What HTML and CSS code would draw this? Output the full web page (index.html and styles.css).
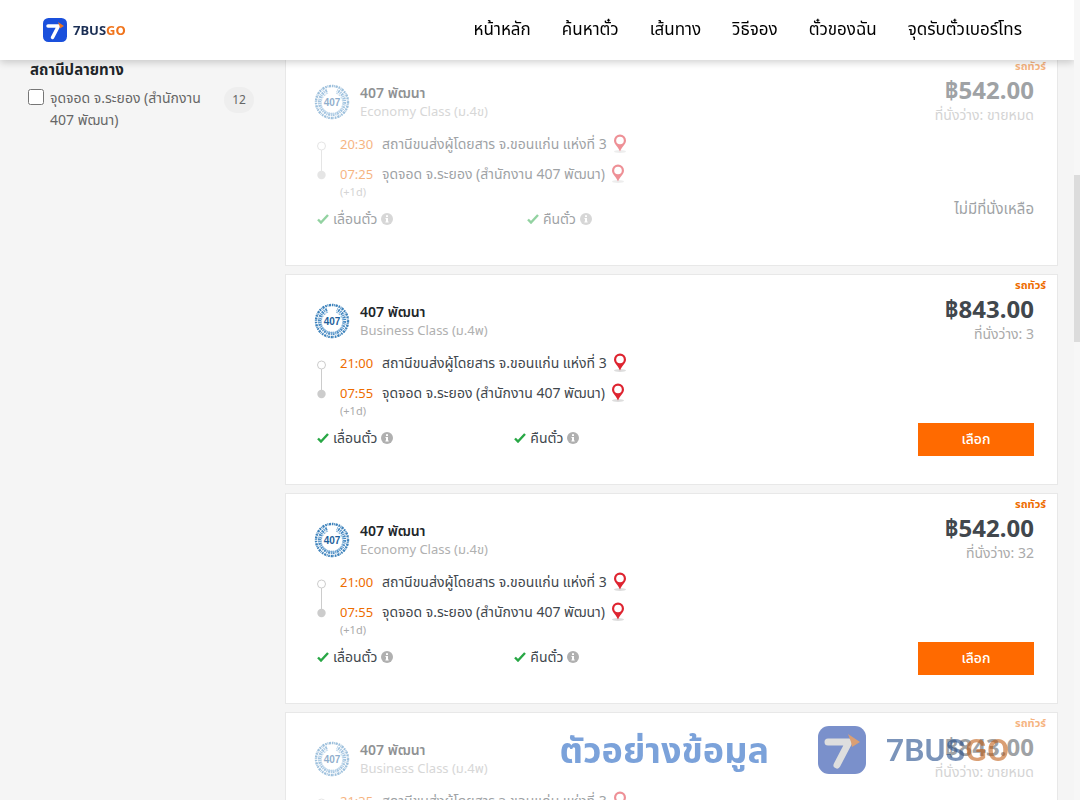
FILE: index.html
```html
<!DOCTYPE html>
<html lang="th">

<head>
    <meta charset="UTF-8">
    <meta name="viewport" content="width=device-width, initial-scale=1.0">
    <title>7BUSGO - ค้นหาตั๋ว</title>
    <link rel="stylesheet" href="styles.css">
</head>

<body>
    <!-- Shared icons -->
    <svg class="sprite" aria-hidden="true">
        <symbol id="brand" viewBox="0 0 48 48">
            <rect class="brand-bg" width="48" height="48" rx="11" />
            <path class="brand-seven" d="M10 16h21L19 39" />
            <path class="brand-arrow" d="M30 8l12 8-8 5-1-5z" />
        </symbol>
        <symbol id="operator" viewBox="0 0 36 36">
            <!-- lettering around the edge -->
            <circle cx="18" cy="18" r="16" fill="none" stroke="#3d82bb" stroke-width="2.4" stroke-dasharray="1.6 .7 .8 .6 2.2 .9" />
            <!-- laurel wreath, open at the top -->
            <path d="M13 6.500A12.500 12.500 0 1 0 23 6.500" fill="none" stroke="#4a8cc4" stroke-width="3.200" stroke-dasharray="1.800 .8 1 .7" />
            <path d="M14 9A10.800 10.800 0 1 0 22 9" fill="none" stroke="#8db8dc" stroke-width="1.200" stroke-dasharray="2 1" />
            <text x="18" y="21.500" text-anchor="middle" class="operator-text">407</text>
        </symbol>
        <symbol id="pin" viewBox="0 0 14 20">
            <ellipse cx="7" cy="17.500" rx="6" ry="1.500" fill="#ddd" />
            <path d="M7 17.500C5.500 13 1 10.500 1 6.500a6 6 0 0 1 12 0C13 10.500 8.500 13 7 17.500z" fill="#de2430" />
            <circle cx="7" cy="6.500" r="3.800" fill="#fff" />
        </symbol>
        <symbol id="rail" viewBox="0 0 9 40">
            <path d="M4.500 9v22" stroke="#ccc" stroke-width="1" />
            <circle cx="4.500" cy="5" r="4" fill="#fff" stroke="#ccc" />
            <circle cx="4.500" cy="34" r="4.200" fill="#ccc" />
        </symbol>
        <symbol id="check" viewBox="0 0 12 10">
            <path d="M1 5.500l3 3L11 1" fill="none" stroke="#28a745" stroke-width="2.400" />
        </symbol>
        <symbol id="info" viewBox="0 0 12 12">
            <circle cx="6" cy="6" r="6" fill="#b0b0b0" />
            <path d="M5 2.200h2v1.800H5zM4.500 5H7v3.500h.7v1H4.400v-1H5V6h-.5z" fill="#fff" />
        </symbol>
    </svg>

    <div class="page">
        <header class="header">
            <a class="brand" href="#">
                <svg class="brand-icon"><use href="#brand" /></svg>
                <span>7BUS<b>GO</b></span>
            </a>
            <nav class="nav">
                <a href="#">หน้าหลัก</a>
                <a href="#">ค้นหาตั๋ว</a>
                <a href="#">เส้นทาง</a>
                <a href="#">วิธีจอง</a>
                <a href="#">ตั๋วของฉัน</a>
                <a href="#">จุดรับตั๋วเบอร์โทร</a>
            </nav>
        </header>

        <div class="content">
            <aside class="filters">
                <h2>สถานีปลายทาง</h2>
                <div class="filter">
                    <input type="checkbox" id="station-407">
                    <label for="station-407">จุดจอด จ.ระยอง (สำนักงาน 407 พัฒนา)</label>
                    <span class="count">12</span>
                </div>
            </aside>

            <main class="trips">
                <article class="trip sold-out">
                    <div class="trip-info">
                        <div class="operator">
                            <svg class="operator-logo"><use href="#operator" /></svg>
                            <div>
                                <h3>407 พัฒนา</h3>
                                <p>Economy Class (ม.4ข)</p>
                            </div>
                        </div>
                        <div class="route">
                            <svg class="rail"><use href="#rail" /></svg>
                            <div class="stops">
                                <div class="stop"><time>20:30</time><span>สถานีขนส่งผู้โดยสาร จ.ขอนแก่น แห่งที่ 3</span><svg class="pin"><use href="#pin" /></svg></div>
                                <div class="stop"><time>07:25</time><span>จุดจอด จ.ระยอง (สำนักงาน 407 พัฒนา)</span><svg class="pin"><use href="#pin" /></svg></div>
                                <small>(+1d)</small>
                            </div>
                        </div>
                        <div class="features">
                            <span><svg class="check"><use href="#check" /></svg>เลื่อนตั๋ว<svg class="info"><use href="#info" /></svg></span>
                            <span><svg class="check"><use href="#check" /></svg>คืนตั๋ว<svg class="info"><use href="#info" /></svg></span>
                        </div>
                    </div>
                    <div class="trip-price">
                        <span class="tag">รถทัวร์</span>
                        <strong>฿542.00</strong>
                        <span class="seats">ที่นั่งว่าง: ขายหมด</span>
                        <span class="no-seats">ไม่มีที่นั่งเหลือ</span>
                    </div>
                </article>

                <article class="trip">
                    <div class="trip-info">
                        <div class="operator">
                            <svg class="operator-logo"><use href="#operator" /></svg>
                            <div>
                                <h3>407 พัฒนา</h3>
                                <p>Business Class (ม.4พ)</p>
                            </div>
                        </div>
                        <div class="route">
                            <svg class="rail"><use href="#rail" /></svg>
                            <div class="stops">
                                <div class="stop"><time>21:00</time><span>สถานีขนส่งผู้โดยสาร จ.ขอนแก่น แห่งที่ 3</span><svg class="pin"><use href="#pin" /></svg></div>
                                <div class="stop"><time>07:55</time><span>จุดจอด จ.ระยอง (สำนักงาน 407 พัฒนา)</span><svg class="pin"><use href="#pin" /></svg></div>
                                <small>(+1d)</small>
                            </div>
                        </div>
                        <div class="features">
                            <span><svg class="check"><use href="#check" /></svg>เลื่อนตั๋ว<svg class="info"><use href="#info" /></svg></span>
                            <span><svg class="check"><use href="#check" /></svg>คืนตั๋ว<svg class="info"><use href="#info" /></svg></span>
                        </div>
                    </div>
                    <div class="trip-price">
                        <span class="tag">รถทัวร์</span>
                        <strong>฿843.00</strong>
                        <span class="seats">ที่นั่งว่าง: 3</span>
                        <button type="button">เลือก</button>
                    </div>
                </article>

                <article class="trip">
                    <div class="trip-info">
                        <div class="operator">
                            <svg class="operator-logo"><use href="#operator" /></svg>
                            <div>
                                <h3>407 พัฒนา</h3>
                                <p>Economy Class (ม.4ข)</p>
                            </div>
                        </div>
                        <div class="route">
                            <svg class="rail"><use href="#rail" /></svg>
                            <div class="stops">
                                <div class="stop"><time>21:00</time><span>สถานีขนส่งผู้โดยสาร จ.ขอนแก่น แห่งที่ 3</span><svg class="pin"><use href="#pin" /></svg></div>
                                <div class="stop"><time>07:55</time><span>จุดจอด จ.ระยอง (สำนักงาน 407 พัฒนา)</span><svg class="pin"><use href="#pin" /></svg></div>
                                <small>(+1d)</small>
                            </div>
                        </div>
                        <div class="features">
                            <span><svg class="check"><use href="#check" /></svg>เลื่อนตั๋ว<svg class="info"><use href="#info" /></svg></span>
                            <span><svg class="check"><use href="#check" /></svg>คืนตั๋ว<svg class="info"><use href="#info" /></svg></span>
                        </div>
                    </div>
                    <div class="trip-price">
                        <span class="tag">รถทัวร์</span>
                        <strong>฿542.00</strong>
                        <span class="seats">ที่นั่งว่าง: 32</span>
                        <button type="button">เลือก</button>
                    </div>
                </article>

                <article class="trip sold-out">
                    <div class="trip-info">
                        <div class="operator">
                            <svg class="operator-logo"><use href="#operator" /></svg>
                            <div>
                                <h3>407 พัฒนา</h3>
                                <p>Business Class (ม.4พ)</p>
                            </div>
                        </div>
                        <div class="route">
                            <svg class="rail"><use href="#rail" /></svg>
                            <div class="stops">
                                <div class="stop"><time>21:35</time><span>สถานีขนส่งผู้โดยสาร จ.ขอนแก่น แห่งที่ 3</span><svg class="pin"><use href="#pin" /></svg></div>
                            </div>
                        </div>
                    </div>
                    <div class="trip-price">
                        <span class="tag">รถทัวร์</span>
                        <strong>฿843.00</strong>
                        <span class="seats">ที่นั่งว่าง: ขายหมด</span>
                    </div>
                </article>
            </main>
        </div>
    </div>

    <div class="scrollbar"><div class="thumb"></div></div>

    <div class="watermark">
        <span class="watermark-text">ตัวอย่างข้อมูล</span>
        <svg class="watermark-icon"><use href="#brand" /></svg>
        <span class="watermark-brand">7BUS<b>GO</b></span>
    </div>
</body>

</html>
```
FILE: styles.css
```css
* {
    box-sizing: border-box;
}

body {
    --brand-blue: #1a50dc;
    --brand-orange: #f0741c;
    --brand-white: #fff;
    display: grid;
    grid-template-columns: 1fr 6px;
    height: 100vh;
    margin: 0;
    overflow: hidden;
    background-color: #f5f5f5;
    color: #41474d;
    font-family: "Noto Sans", "Noto Sans Thai", "Open Sans", sans-serif;
    font-size: 13px;
}

h2,
h3,
p {
    margin: 0;
}

svg {
    flex: none;
}

.sprite {
    position: absolute;
    width: 0;
    height: 0;
}

.brand-bg {
    fill: var(--brand-blue);
}

.brand-seven {
    fill: none;
    stroke: var(--brand-white);
    stroke-width: 7;
    stroke-linecap: round;
    stroke-linejoin: round;
}

.brand-arrow {
    fill: var(--brand-orange);
}

.page {
    min-width: 0;
    height: 100vh;
    overflow: hidden;
}

/* Header */
.header {
    position: sticky;
    top: 0;
    z-index: 2;
    display: flex;
    align-items: center;
    justify-content: space-between;
    height: 60px;
    padding: 0 52px 0 43px;
    background-color: #fff;
    box-shadow: 0 2px 8px rgba(0, 0, 0, 0.2);
}

.brand {
    display: flex;
    align-items: center;
    gap: 6px;
    color: #1b2f55;
    font-size: 13px;
    font-weight: bold;
    text-decoration: none;
}

.brand b,
.watermark-brand b {
    color: var(--brand-orange);
    font-weight: inherit;
}

.brand-icon {
    width: 24px;
    height: 24px;
}

.nav {
    display: flex;
    gap: 31px;
}

.nav a {
    color: #000;
    font-size: 17px;
    text-decoration: none;
}

/* Results are scrolled a little way under the header */
.content {
    display: flex;
    align-items: flex-start;
    margin-top: -5px;
}

.filters {
    flex: none;
    width: 285px;
    padding: 4px 31px 0 28px;
}

.filters h2 {
    padding-left: 2px;
    color: #212529;
    font-size: 15px;
    line-height: 20px;
}

.filter {
    display: flex;
    align-items: flex-start;
    margin-top: 8px;
    color: #666;
    font-size: 14px;
    line-height: 22px;
}

.filter input {
    flex: none;
    width: 16px;
    height: 16px;
    margin: 2px 6px 0 0;
}

.filter label {
    flex: 1;
}

.count {
    min-width: 30px;
    border-radius: 13px;
    background-color: #eee;
    font-size: 12px;
    line-height: 26px;
    text-align: center;
}

/* Trip cards */
.trips {
    display: flex;
    flex: 1;
    flex-direction: column;
    gap: 8px;
    padding-right: 16px;
}

.trip {
    display: flex;
    min-height: 211px;
    padding: 0 23px 0 28px;
    border: 1px solid #e8e8e8;
    background-color: #fff;
}

.sold-out > * {
    opacity: 0.5;
}

.trip-info {
    flex: 1;
    padding-top: 28px;
}

.operator {
    display: flex;
    gap: 10px;
}

.operator-logo {
    width: 36px;
    height: 36px;
}

.operator-text {
    fill: #1f5f9c;
    font-family: "Liberation Sans", sans-serif;
    font-size: 10px;
    font-weight: bold;
}

.operator h3 {
    color: #212529;
    font-size: 14px;
    font-weight: 600;
    line-height: 18px;
}

.operator p {
    color: #b0b0b0;
    line-height: 18px;
}

.route {
    display: flex;
    gap: 14px;
    margin-top: 12px;
    padding-left: 3px;
}

.rail {
    width: 9px;
    height: 40px;
    margin-top: 9px;
}

.stop {
    display: flex;
    align-items: center;
    height: 24px;
}

.stop + .stop {
    margin-top: 6px;
}

.stop time {
    width: 42px;
    color: #ee6c00;
}

.stop span {
    font-size: 14px;
}

.pin {
    width: 14px;
    height: 20px;
    margin-left: 6px;
}

.route small {
    display: block;
    color: #aaa;
    font-size: 11px;
    line-height: 12px;
}

.features {
    display: grid;
    grid-template-columns: repeat(3, 1fr);
    margin: 10px 9px 0 3px;
    font-size: 14px;
    line-height: 22px;
}

.sold-out .features {
    margin-right: -12px;
}

.features span {
    display: flex;
    align-items: center;
}

.check {
    width: 12px;
    height: 10px;
    margin-right: 4px;
}

.info {
    width: 12px;
    height: 12px;
    margin-left: 4px;
}

.trip-price {
    display: flex;
    flex-direction: column;
    align-items: flex-end;
    padding-top: 2px;
}

.tag {
    margin-right: -12px;
    color: #ee6c00;
    font-size: 11px;
    font-weight: bold;
    line-height: 16px;
}

.trip-price strong {
    font-size: 24px;
    line-height: 32px;
}

.seats {
    color: #aaa;
    font-size: 14px;
    line-height: 18px;
}

.no-seats {
    margin-top: 74px;
    font-size: 15px;
    line-height: 20px;
}

.trip-price button {
    width: 116px;
    height: 33px;
    margin-top: 80px;
    border: none;
    background-color: #ff6a00;
    color: #fff;
    font-family: inherit;
    font-size: 14px;
    font-weight: 500;
    cursor: pointer;
}

/* Scrollbar */
.scrollbar {
    background-color: #f7f7f7;
}

.thumb {
    height: 167px;
    margin-top: 175px;
    background-color: #dcdcdc;
}

/* Watermark over the results */
.watermark {
    --brand-blue: #1a40a5;
    --brand-orange: #bf5a10;
    --brand-white: #c6c6c6;
    position: absolute;
    right: 71px;
    bottom: 22px;
    z-index: 3;
    display: flex;
    align-items: center;
    height: 56px;
    opacity: 0.58;
    pointer-events: none;
}

.watermark-text {
    margin-right: 49px;
    color: #1d5fc0;
    font-size: 36px;
    font-weight: bold;
    line-height: 56px;
}

.watermark-icon {
    width: 48px;
    height: 48px;
    margin-right: 20px;
}

.watermark-brand {
    color: #1c4889;
    font-family: Roboto, sans-serif;
    font-size: 32px;
    font-weight: 600;
    line-height: 56px;
}
```
